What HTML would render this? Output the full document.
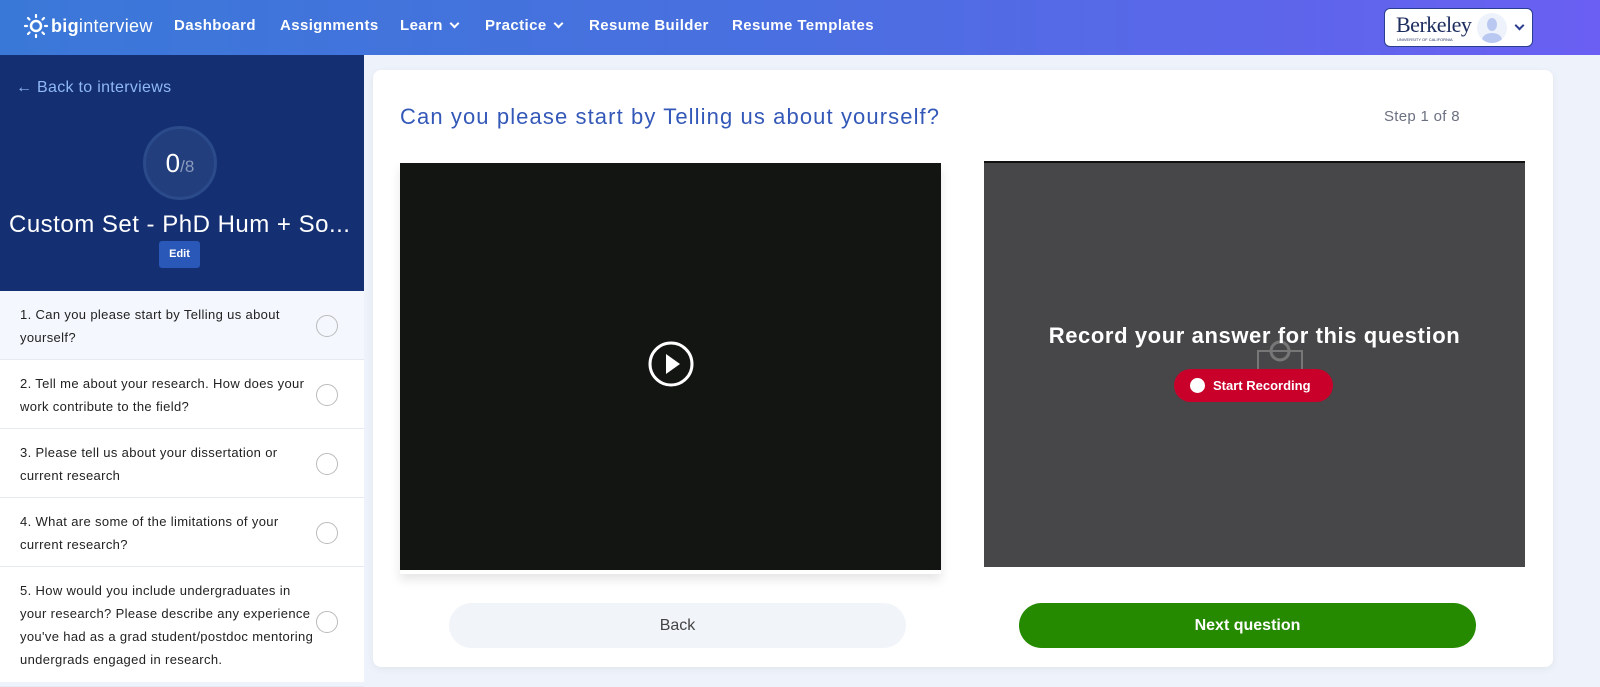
<!DOCTYPE html>
<html><head><meta charset="utf-8"><style>
*{margin:0;padding:0;box-sizing:border-box}
body{width:1600px;height:682px;overflow:hidden;font-family:"Liberation Sans",sans-serif;background:#eef2fa;position:relative}
.nav{position:absolute;left:0;top:0;width:1600px;height:55px;background:linear-gradient(90deg,#3a78d8 0%,#4a6fe0 50%,#6a5ff2 100%)}
.nav .logo{position:absolute;left:24px;top:14px;color:#fff;font-size:18px;letter-spacing:0.3px}
.nav a{position:absolute;top:17px;color:#fff;font-size:15px;font-weight:bold;text-decoration:none;letter-spacing:0.4px}
.chev{display:inline-block;width:7px;height:7px;border-right:2px solid #fff;border-bottom:2px solid #fff;transform:rotate(45deg);margin-left:8px;position:relative;top:-3px}
.acct{position:absolute;left:1384px;top:8px;width:149px;height:39px;background:#fff;border-radius:6px;border:1px solid #2a3d8f}
.side{position:absolute;left:0;top:55px;width:364px;height:627px;background:#fff}
.sidetop{height:236px;background:#142f72;position:relative;color:#fff}
.q{position:relative;border-bottom:1px solid #e6eaf2;padding:12px 50px 0 20px;font-size:13px;letter-spacing:0.35px;line-height:23px;color:#222}
.q .c{position:absolute;right:26px;width:22px;height:22px;border:1.5px solid #bbb;border-radius:50%}
.card{position:absolute;left:373px;top:70px;width:1180px;height:597px;background:#fff;border-radius:8px;box-shadow:0 2px 8px rgba(0,0,0,.06)}
</style></head><body>
<div class="nav">
 <div class="logo"><svg width="24" height="24" viewBox="0 0 24 24" style="vertical-align:-6px;margin-right:3px"><circle cx="12" cy="12" r="5" fill="none" stroke="#fff" stroke-width="2.5"/><g stroke="#fff" stroke-width="2.2" stroke-linecap="round"><line x1="12" y1="1" x2="12" y2="3"/><line x1="12" y1="21" x2="12" y2="23"/><line x1="1" y1="12" x2="3" y2="12"/><line x1="21" y1="12" x2="23" y2="12"/><line x1="4" y1="4" x2="5.5" y2="5.5"/><line x1="18.5" y1="18.5" x2="20" y2="20"/><line x1="4" y1="20" x2="5.5" y2="18.5"/><line x1="18.5" y1="5.5" x2="20" y2="4"/></g></svg><b>big</b>interview</div>
 <a style="left:174px">Dashboard</a>
 <a style="left:280px">Assignments</a>
 <a style="left:400px">Learn<span class="chev"></span></a>
 <a style="left:485px">Practice<span class="chev"></span></a>
 <a style="left:589px">Resume Builder</a>
 <a style="left:732px">Resume Templates</a>
 <div class="acct">
  <div style="position:absolute;left:11px;top:3px;font-family:'Liberation Serif',serif;font-size:22px;color:#1c2d5e;letter-spacing:-0.5px">Berkeley</div>
  <div style="position:absolute;left:12px;top:28px;font-size:4px;color:#1c2d5e">UNIVERSITY OF CALIFORNIA</div>
  <div style="position:absolute;left:92px;top:4px;width:30px;height:30px;border-radius:50%;background:#eef2fb;overflow:hidden"><div style="position:absolute;left:10px;top:5px;width:10px;height:13px;border-radius:50%;background:#b8c8f0"></div><div style="position:absolute;left:5px;top:20px;width:20px;height:14px;border-radius:50%;background:#b8c8f0"></div></div>
  <span style="position:absolute;left:131px;top:13px;width:7px;height:7px;border-right:2px solid #2a3d8f;border-bottom:2px solid #2a3d8f;transform:rotate(45deg)"></span>
 </div>
</div>
<div class="side">
 <div class="sidetop">
  <div style="position:absolute;left:16px;top:24px;color:#8fb8f5;font-size:16px;letter-spacing:0.3px">&#8592; Back to interviews</div>
  <div style="position:absolute;left:143px;top:71px;width:74px;height:74px;border-radius:50%;border:3px solid #2b4a8a;background:#223e7c;text-align:center;line-height:68px;font-size:26px">0<span style="font-size:17px;color:#8a9bbf">/8</span></div>
  <div style="position:absolute;left:9px;top:156px;font-size:24px;letter-spacing:0.5px;white-space:nowrap">Custom Set - PhD Hum + So...</div>
  <div style="position:absolute;left:159px;top:186px;width:41px;height:27px;background:#2a58b8;border-radius:3px;font-size:11px;font-weight:bold;text-align:center;line-height:27px">Edit</div>
 </div>
 <div class="q" style="background:#f4f7fd;height:69px">1. Can you please start by Telling us about yourself?<span class="c" style="top:24px"></span></div>
 <div class="q" style="height:69px">2. Tell me about your research. How does your work contribute to the field?<span class="c" style="top:24px"></span></div>
 <div class="q" style="height:69px">3. Please tell us about your dissertation or current research<span class="c" style="top:24px"></span></div>
 <div class="q" style="height:69px">4. What are some of the limitations of your current research?<span class="c" style="top:24px"></span></div>
 <div class="q" style="height:120px;padding-right:48px">5. How would you include undergraduates in your research? Please describe any experience you've had as a grad student/postdoc mentoring undergrads engaged in research.<span class="c" style="top:44px"></span></div>
</div>
<div class="card">
 <div style="position:absolute;left:27px;top:34px;font-size:22px;letter-spacing:1.1px;color:#3358b8">Can you please start by Telling us about yourself?</div>
 <div style="position:absolute;left:1011px;top:38px;font-size:15px;letter-spacing:0.3px;color:#6b7080">Step 1 of 8</div>
 <div style="position:absolute;left:27px;top:93px;width:541px;height:411px;background:#131513;box-shadow:0 6px 10px rgba(0,0,0,.1);border-bottom:4px solid #fff">
  <svg style="position:absolute;left:248px;top:178px" width="46" height="46" viewBox="0 0 46 46"><circle cx="23" cy="23" r="21" fill="none" stroke="#fff" stroke-width="3"/><path d="M18 13 L32 23 L18 33 Z" fill="#fff"/></svg>
 </div>
 <div style="position:absolute;left:611px;top:91px;width:541px;height:406px;background:#474749;border-top:2px solid #111">
  <svg style="position:absolute;left:272px;top:176px" width="48" height="40" viewBox="0 0 48 40"><rect x="2" y="12" width="44" height="26" fill="none" stroke="#777" stroke-width="2"/><circle cx="24" cy="12" r="9" fill="none" stroke="#777" stroke-width="3"/></svg>
  <div style="position:absolute;left:0;width:100%;top:160px;text-align:center;color:#fff;font-size:22px;letter-spacing:0.6px;font-weight:bold">Record your answer for this question</div>
  <div style="position:absolute;left:190px;top:206px;width:159px;height:33px;border-radius:17px;background:#c8002a;color:#fff;font-size:13px;font-weight:bold;line-height:33px;padding-left:39px"><span style="position:absolute;left:16px;top:9px;width:15px;height:15px;border-radius:50%;background:#fff"></span>Start Recording</div>
 </div>
 <div style="position:absolute;left:76px;top:533px;width:457px;height:45px;border-radius:23px;background:#f1f4f9;text-align:center;line-height:45px;font-size:16px;color:#444">Back</div>
 <div style="position:absolute;left:646px;top:533px;width:457px;height:45px;border-radius:23px;background:#268a00;text-align:center;line-height:45px;font-size:16px;font-weight:bold;color:#fff">Next question</div>
</div>
</body></html>
